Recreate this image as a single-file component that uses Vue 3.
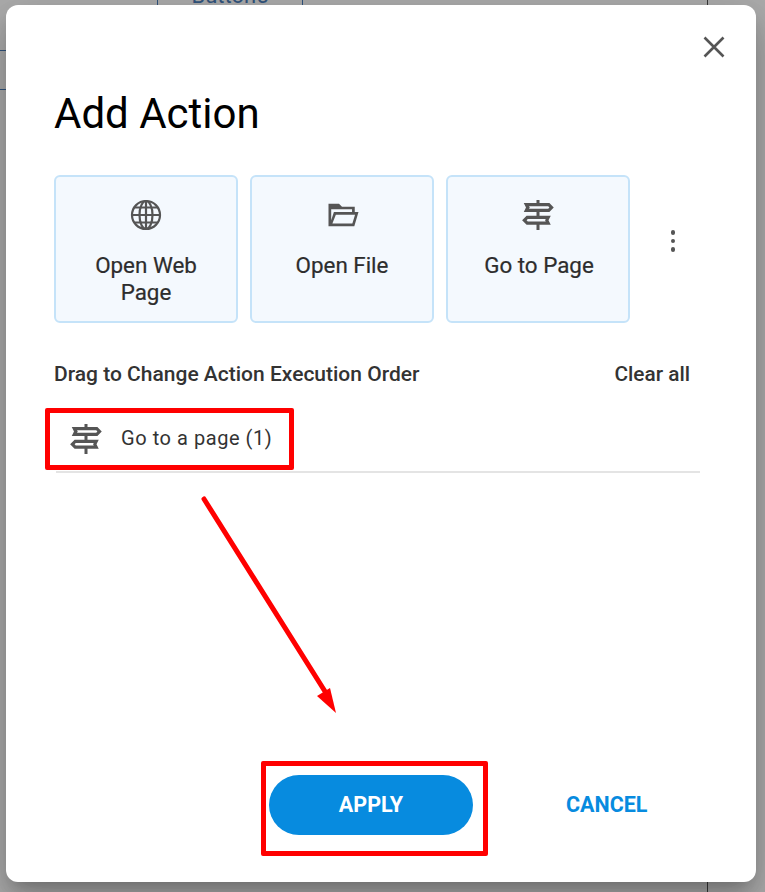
<template>
  <div class="page">
    <!-- what peeks out behind the dialog -->
    <div class="backdrop">
      <div class="bg-button">Button5</div>
      <div class="bg-line line-a"></div>
      <div class="bg-line line-b"></div>
      <div class="bg-rule"></div>
    </div>

    <div class="dialog">
      <button class="close" aria-label="Close">
        <svg width="24" height="24" viewBox="0 0 24 24">
          <path d="M2.5 2.5l19 19M21.5 2.5l-19 19" fill="none" stroke="#555" stroke-width="2.6" />
        </svg>
      </button>

      <h1 class="title">Add Action</h1>

      <div class="cards">
        <div v-for="card in cards" :key="card.label" class="card">
          <svg v-if="card.icon === 'globe'" class="card-icon" viewBox="0 0 36 36" fill="none" stroke="#555" stroke-width="2.2">
            <circle cx="18" cy="18" r="14" />
            <ellipse cx="18" cy="18" rx="6.5" ry="14" />
            <path d="M18 4v28M4 18h28M6.5 10.5h23M6.5 25.5h23" />
          </svg>
          <svg v-else-if="card.icon === 'folder'" class="card-icon" viewBox="0 0 24 24">
            <path :d="folderPath" fill="#555" fill-rule="evenodd" />
          </svg>
          <svg v-else class="card-icon sign" viewBox="0 0 24 24">
            <path :d="signPath" fill="#555" fill-rule="evenodd" />
          </svg>
          <div class="card-label" :class="{ shifted: card.icon === 'sign' }">{{ card.label }}</div>
        </div>
        <button class="more" aria-label="More">
          <span></span><span></span><span></span>
        </button>
      </div>

      <div class="order-head">
        <span>Drag to Change Action Execution Order</span>
        <span class="clear">Clear all</span>
      </div>

      <div class="action-row">
        <svg class="row-icon" viewBox="0 0 24 24">
          <path :d="signPath" fill="#555" fill-rule="evenodd" />
        </svg>
        <span class="row-label">Go to a page (1)</span>
      </div>

      <div class="footer">
        <button class="apply">APPLY</button>
        <button class="cancel">CANCEL</button>
      </div>
    </div>

    <!-- red annotations drawn on top of the screenshot -->
    <div class="mark mark-row"></div>
    <div class="mark mark-apply"></div>
    <svg class="arrow" width="765" height="892" viewBox="0 0 765 892">
      <path d="M204 499L326 693" fill="none" stroke="#f00" stroke-width="5" stroke-linecap="round" />
      <path d="M336 713L317 696L330 688z" fill="#f00" />
    </svg>
  </div>
</template>

<script setup>
const cards = [
  { label: 'Open Web Page', icon: 'globe' },
  { label: 'Open File', icon: 'folder' },
  { label: 'Go to Page', icon: 'sign' }
]

const folderPath = 'M3 4.5H10L12 6.5H20.5V10H23L20.2 19.5H3z' +
  'M4.8 8.2V15.5L6.6 10H18.7V8.2z' +
  'M7.9 11.8L5.6 17.7H18.9L20.7 11.8z'

const signPath = 'M11 2h2v2h6.6l2.9 3-2.9 3H13v2.5h7.5l-1.5 3 1.5 3H13V22h-2v-3.5H4.4L1.4 15.5l3-3H11V10H2.5L4 7 2.5 4H11z' +
  'M6 6.2l.5.8-.5.8h12.8l.8-.8-.8-.8z' +
  'M5.2 14.7l-.8.8.8.8h12l-.5-.8.5-.8z'
</script>

<style>
html, body {
  margin: 0;
  background: #fff;
}
</style>

<style scoped>
.page {
  position: relative;
  width: 765px;
  height: 892px;
  overflow: hidden;
  padding: 5px 9px 10px 6px;
  box-sizing: border-box;
  font-family: Roboto, "Liberation Sans", sans-serif;
}

.backdrop {
  position: absolute;
  inset: 0;
  background: #fff;
}

.backdrop::after {
  content: "";
  position: absolute;
  inset: 0;
  background: rgba(0, 0, 0, 0.32);
}

.bg-button {
  position: absolute;
  left: 157px;
  top: -30px;
  width: 146px;
  height: 50px;
  box-sizing: border-box;
  border: 1px solid #4a7ebb;
  color: #4a7ebb;
  font-size: 22px;
  line-height: 50px;
  text-align: center;
}

.bg-line {
  position: absolute;
  left: 0;
  width: 20px;
  height: 1px;
  background: #4a7ebb;
}

.line-a { top: 50px; }
.line-b { top: 89px; }

.bg-rule {
  position: absolute;
  left: 707px;
  top: 0;
  width: 1px;
  height: 892px;
  background: #555;
}

.dialog {
  position: relative;
  width: 750px;
  height: 877px;
  box-sizing: border-box;
  padding: 85px 56px 47px 48px;
  display: flex;
  flex-direction: column;
  background: #fff;
  border-radius: 12px;
  box-shadow: 0 11px 15px -7px rgba(0, 0, 0, 0.2), 0 24px 38px 3px rgba(0, 0, 0, 0.14), 0 9px 46px 8px rgba(0, 0, 0, 0.12);
}

button {
  border: 0;
  padding: 0;
  background: none;
  font: inherit;
}

.close {
  position: absolute;
  top: 30px;
  right: 30px;
  width: 24px;
  height: 24px;
  display: flex;
}

.title {
  margin: 0;
  font-size: 42px;
  line-height: 48px;
  font-weight: 400;
  color: #000;
}

.cards {
  display: flex;
  gap: 12px;
  margin-top: 37px;
}

.card {
  width: 184px;
  height: 148px;
  box-sizing: border-box;
  border: 2px solid #c5e3f9;
  border-radius: 6px;
  background: #f4f9fe;
  padding: 20px 24px 0;
  display: flex;
  flex-direction: column;
  align-items: center;
  color: #2d2d2d;
}

.card-icon {
  width: 36px;
  height: 36px;
  flex: none;
}

.card-label {
  margin-top: 19px;
  font-size: 22.4px;
  line-height: 27px;
  font-weight: 400;
  -webkit-text-stroke: 0.2px #2d2d2d;
  text-align: center;
}

.card-label.shifted {
  padding-left: 2px;
}

.more {
  width: 20px;
  margin-left: 21px;
  padding-bottom: 16px;
  display: flex;
  flex-direction: column;
  align-items: center;
  justify-content: center;
  gap: 4px;
}

.more span {
  width: 4.5px;
  height: 4.5px;
  border-radius: 50%;
  background: #555;
}

.order-head {
  display: flex;
  justify-content: space-between;
  padding-right: 10px;
  margin-top: 38px;
  font-size: 21px;
  line-height: 26px;
  font-weight: 500;
  color: #333;
}

.clear {
  font-size: 20.8px;
}

.action-row {
  display: flex;
  align-items: center;
  gap: 17px;
  height: 64px;
  margin: 20px 0 0 2px;
  padding-left: 12px;
  border-bottom: 2px solid #e4e4e4;
  box-sizing: content-box;
  font-size: 20px;
  letter-spacing: 0.55px;
  color: #333;
}

.row-label {
  padding-bottom: 2px;
}

.row-icon {
  width: 36px;
  height: 36px;
  flex: none;
}

.footer {
  margin-top: auto;
  display: flex;
  align-items: center;
}

.apply {
  width: 204px;
  height: 60px;
  margin-left: 215px;
  padding-bottom: 2px;
  border-radius: 30px;
  background: #078bdf;
  color: #fff;
  font-size: 21.5px;
  font-weight: 700;
}

.cancel {
  margin-left: 93px;
  padding-bottom: 2px;
  color: #078bdf;
  font-size: 21.5px;
  font-weight: 700;
}

.mark {
  position: absolute;
  box-sizing: border-box;
  border: 5px solid #f00;
  border-radius: 2px;
}

.mark-row {
  left: 45px;
  top: 408px;
  width: 249px;
  height: 62px;
}

.mark-apply {
  left: 261px;
  top: 761px;
  width: 227px;
  height: 95px;
}

.arrow {
  position: absolute;
  inset: 0;
}
</style>
